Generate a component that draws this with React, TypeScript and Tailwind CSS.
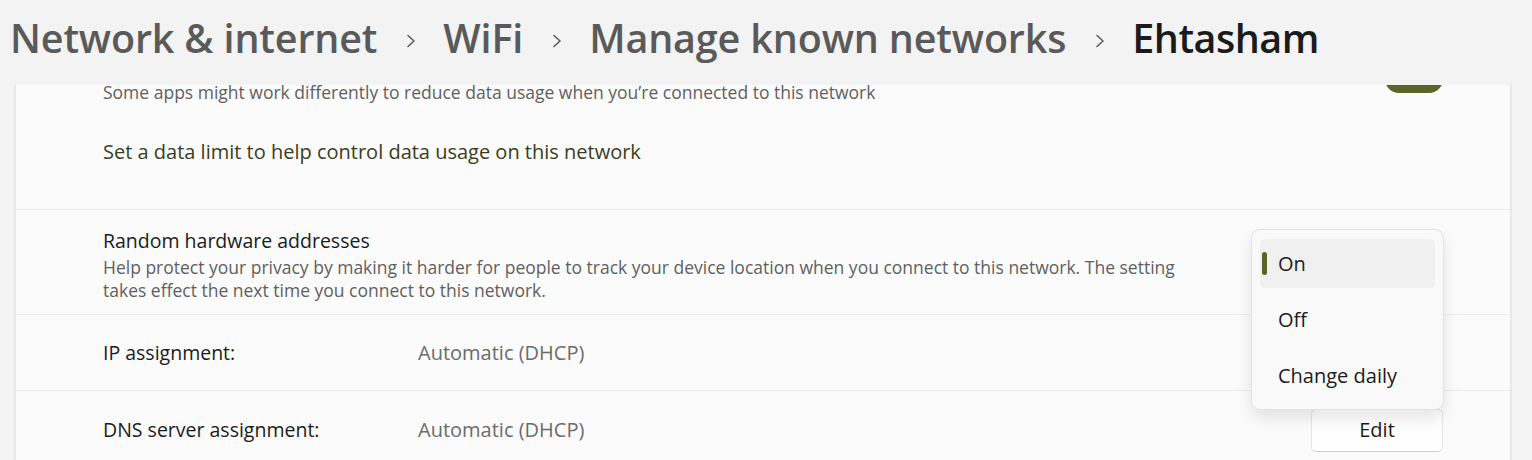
import React from 'react';

const FONT = { fontFamily: '"Open Sans", "Noto Sans", "Liberation Sans", sans-serif' };

function Chevron() {
  return (
    <svg width="10" height="14" viewBox="0 0 10 14" className="shrink-0">
      <path d="M2 1.5 L8 7 L2 12.5" fill="none" stroke="#5c5c5c" strokeWidth="1.6" strokeLinecap="round" strokeLinejoin="round" />
    </svg>
  );
}

function EditButton({ hidden = false }: { hidden?: boolean }) {
  // the IP row's button sits under the open menu, only its edge shows
  return (
    <button
      aria-label="Edit"
      className="w-[132px] h-[43px] rounded-[5px] bg-[#fefefe] border border-[#e5e5e5] border-b-[#d0d0d0] text-[20px] text-[#1b1b1b]"
    >
      {hidden ? null : 'Edit'}
    </button>
  );
}

export default function App() {
  const crumbs = ['Network & internet', 'WiFi', 'Manage known networks'];

  return (
    <div className="h-[460px] w-[1532px] flex flex-col bg-[#f3f3f3] overflow-hidden" style={FONT}>
      {/* Breadcrumb header */}
      <div className="h-[85px] shrink-0 flex items-start pl-[10px] pt-[12px] gap-[27px]">
        {crumbs.map(c => (
          <React.Fragment key={c}>
            <span className="text-[39.5px] font-semibold text-[#5a5a5a] leading-[52px] tracking-[-0.15px]">{c}</span>
            <div className="pt-[22px] ml-[2px]"><Chevron /></div>
          </React.Fragment>
        ))}
        <span className="text-[39.5px] font-semibold text-[#1b1b1b] leading-[52px] tracking-[-0.5px]">Ehtasham</span>
      </div>

      {/* Settings card */}
      <div className="relative flex-1 ml-[14px] w-[1498px] bg-[#fbfbfb] border-x-2 border-[#e8e8e8] overflow-hidden">
        {/* Metered connection row (scrolled partly under the header) */}
        <div className="-mt-[20px] flex items-start justify-between pl-[87px] pr-[67px] pb-[44px] border-b border-[#ececec]">
          <div className="pt-[17px]">
            <p className="text-[17.5px] leading-5 text-[#606060]">
              Some apps might work differently to reduce data usage when you’re connected to this network
            </p>
            <p className="mt-[37px] text-[20px] leading-[26px] text-[#3a3d22]">
              Set a data limit to help control data usage on this network
            </p>
          </div>
          <div className="w-[58px] h-[28px] rounded-full bg-[#5b6527] ring-2 ring-white" />
        </div>

        {/* Random hardware addresses */}
        <div className="pl-[87px] pr-[67px] pt-[18px] pb-[12px] border-b border-[#ececec]">
          <p className="text-[19.5px] leading-[26px] text-[#1b1b1b]">Random hardware addresses</p>
          <p className="mt-[2px] text-[17.5px] leading-[23px] text-[#606060]">
            Help protect your privacy by making it harder for people to track your device location when you connect to this network. The setting
            <br />
            takes effect the next time you connect to this network.
          </p>
        </div>

        {/* IP assignment */}
        <div className="h-[76px] flex items-center pl-[87px] pr-[67px] border-b border-[#ececec]">
          <span className="w-[315px] text-[19.5px] text-[#1b1b1b]">IP assignment:</span>
          <span className="flex-1 text-[20px] text-[#6b6b6b]">Automatic (DHCP)</span>
          <EditButton hidden />
        </div>

        {/* DNS server assignment */}
        <div className="h-[78px] flex items-center pl-[87px] pr-[67px]">
          <span className="w-[315px] text-[19.5px] text-[#1b1b1b]">DNS server assignment:</span>
          <span className="flex-1 text-[20px] text-[#6b6b6b]">Automatic (DHCP)</span>
          <EditButton />
        </div>

        {/* Open dropdown menu */}
        <div className="absolute left-[1235px] top-[144px] w-[193px] h-[181px] rounded-[9px] border border-[#e3e3e3] bg-[#f9f9f9] shadow-[0_8px_16px_rgba(0,0,0,0.10)] px-[8px] py-[9px] flex flex-col gap-[7px]">
          {['On', 'Off', 'Change daily'].map((opt, i) => (
            <div
              key={opt}
              className={`relative h-[49px] rounded-[5px] flex items-center pl-[18px] text-[20px] text-[#1b1b1b] ${i === 0 ? 'bg-[#f0f0f0]' : ''}`}
            >
              {i === 0 && <span className="absolute left-[2px] top-[13px] w-[5px] h-[23px] rounded-full bg-[#5b6527]" />}
              {opt}
            </div>
          ))}
        </div>
      </div>
    </div>
  );
}
